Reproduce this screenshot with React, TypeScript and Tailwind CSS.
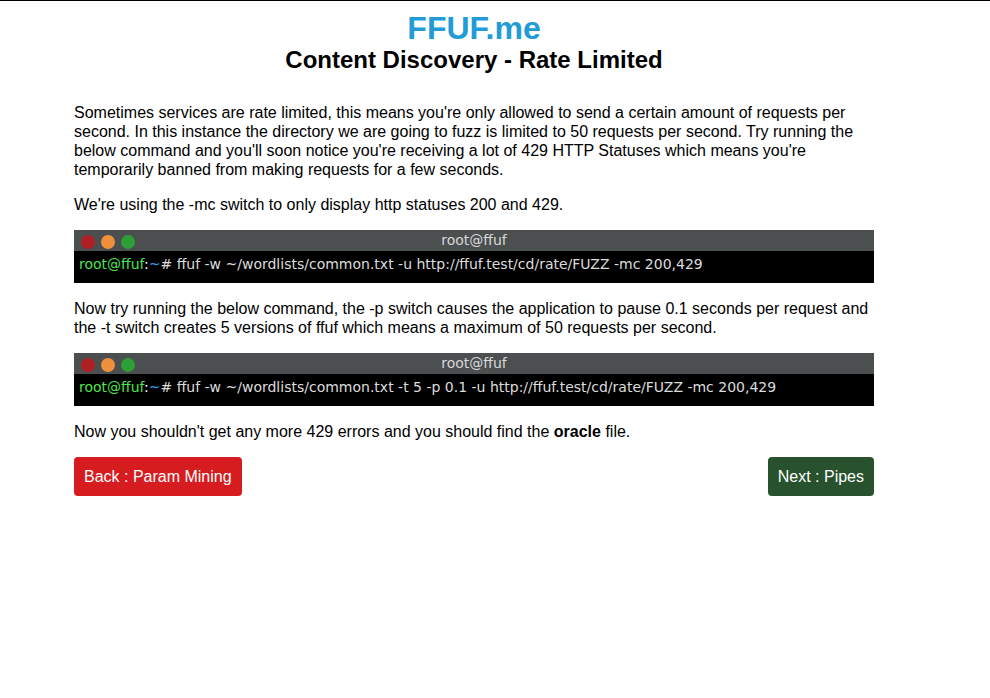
// App.tsx
// FFUF.me – Content Discovery, rate limited lesson page.

const sans = 'font-["Liberation_Sans",Arial,sans-serif]';

function Terminal({ command }: { command: string }) {
  return (
    <div className='font-["DejaVu_Sans",sans-serif] text-[14px]'>
      <div className="relative h-[21px] bg-[#4b4f50] text-center text-[#d8d8d8] leading-[20px]">
        <div className="absolute left-[7px] top-[5px] flex gap-[6px]">
          <span className="w-[14px] h-[14px] rounded-full bg-[#b01f24]" />
          <span className="w-[14px] h-[14px] rounded-full bg-[#f0903c]" />
          <span className="w-[14px] h-[14px] rounded-full bg-[#2e9e36]" />
        </div>
        root@ffuf
      </div>
      <div className="bg-black h-[32px] px-[5px] pt-[3px] text-[#dcdcdc] leading-[20px] whitespace-pre">
        <span className="text-[#4ee44e]">root@ffuf</span>
        <span className="text-white">:</span>
        <span className="text-[#2f9be0]">~</span>
        {'# ' + command}
      </div>
    </div>
  );
}

export default function App() {
  return (
    <div className={`${sans} min-h-[698px] bg-white border-t border-black text-black`}>
      <div className="ml-[74px] w-[800px]">
        <h1 className="text-center text-[32px] font-bold text-[#229cd6] leading-[36px] pt-[9px]">FFUF.me</h1>
        <h2 className="text-center text-[24px] font-bold leading-[28px]">Content Discovery - Rate Limited</h2>

        <div className="mt-[29px] text-[16px] leading-[19px]">
          <p>
            Sometimes services are rate limited, this means you're only allowed to send a certain amount of requests per
            second. In this instance the directory we are going to fuzz is limited to 50 requests per second. Try running the
            below command and you'll soon notice you're receiving a lot of 429 HTTP Statuses which means you're
            temporarily banned from making requests for a few seconds.
          </p>
          <p className="mt-[16px]">We're using the -mc switch to only display http statuses 200 and 429.</p>

          <div className="mt-[16px]">
            <Terminal command="ffuf -w ~/wordlists/common.txt -u http://ffuf.test/cd/rate/FUZZ -mc 200,429" />
          </div>

          <p className="mt-[16px]">
            Now try running the below command, the -p switch causes the application to pause 0.1 seconds per request and
            the -t switch creates 5 versions of ffuf which means a maximum of 50 requests per second.
          </p>

          <div className="mt-[16px]">
            <Terminal command="ffuf -w ~/wordlists/common.txt -t 5 -p 0.1 -u http://ffuf.test/cd/rate/FUZZ -mc 200,429" />
          </div>

          <p className="mt-[16px]">
            Now you shouldn't get any more 429 errors and you should find the <b>oracle</b> file.
          </p>

          <div className="mt-[16px] flex justify-between">
            <button className="bg-[#d61c1f] text-white rounded-[4px] px-[10px] h-[39px] leading-[39px]">Back : Param Mining</button>
            <button className="bg-[#27522d] text-white rounded-[4px] px-[10px] h-[39px] leading-[39px]">Next : Pipes</button>
          </div>
        </div>
      </div>
    </div>
  );
}
